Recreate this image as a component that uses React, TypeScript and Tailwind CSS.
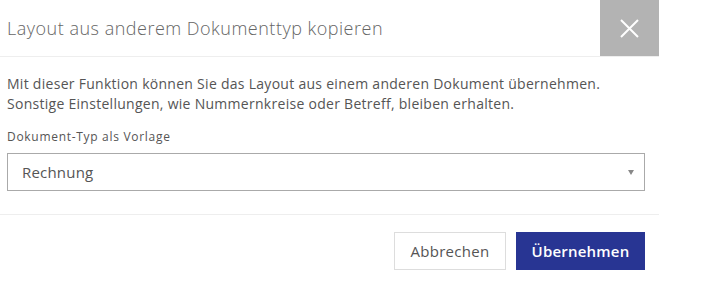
export default function App() {
  return (
    <div className="h-[300px] w-[725px] bg-white font-['Open_Sans',sans-serif]">
      <div className="w-[659px]">
        {/* header */}
        <div className="flex h-[57px] items-stretch justify-between border-b border-[#eeeeee]">
          <h1 className="flex items-center pl-[7px] pt-[1px] text-[18px] font-light tracking-[0.5px] text-[#666666]">
            Layout aus anderem Dokumenttyp kopieren
          </h1>
          <button className="flex w-[59px] items-center justify-center bg-[#b3b3b3]">
            <svg width="19" height="19" viewBox="0 0 19 19" fill="none" stroke="white" strokeWidth="2">
              <path d="M1 1 L18 18 M18 1 L1 18" />
            </svg>
          </button>
        </div>

        {/* body */}
        <div className="pb-[23px] pl-[7px] pr-[14px] pt-[17px]">
          <p className="text-[14px] leading-[20px] tracking-[0.28px] text-[#555555]">
            Mit dieser Funktion können Sie das Layout aus einem anderen Dokument übernehmen.
            <br />
            Sonstige Einstellungen, wie Nummernkreise oder Betreff, bleiben erhalten.
          </p>
          <label className="mt-[14px] block text-[12px] leading-[18px] tracking-[0.7px] text-[#555555]">
            Dokument-Typ als Vorlage
          </label>
          <div className="mt-[7px] flex h-[38px] items-center justify-between border border-[#aaaaaa] pl-[14px] pr-[10px]">
            <span className="text-[15px] tracking-[0.2px] text-[#555555]">Rechnung</span>
            <svg width="6" height="5" viewBox="0 0 6 5">
              <path d="M0 0 L6 0 L3 5 Z" fill="#888888" />
            </svg>
          </div>
        </div>

        {/* footer */}
        <div className="flex justify-end gap-[10px] border-t border-[#eeeeee] pr-[14px] pt-[17px]">
          <button className="h-[38px] w-[112px] border border-[#dddddd] bg-white text-[15px] tracking-[0.3px] text-[#555555]">
            Abbrechen
          </button>
          <button className="h-[38px] w-[129px] bg-[#283593] text-[15px] font-semibold tracking-[0.2px] text-white">
            Übernehmen
          </button>
        </div>
      </div>
    </div>
  )
}
